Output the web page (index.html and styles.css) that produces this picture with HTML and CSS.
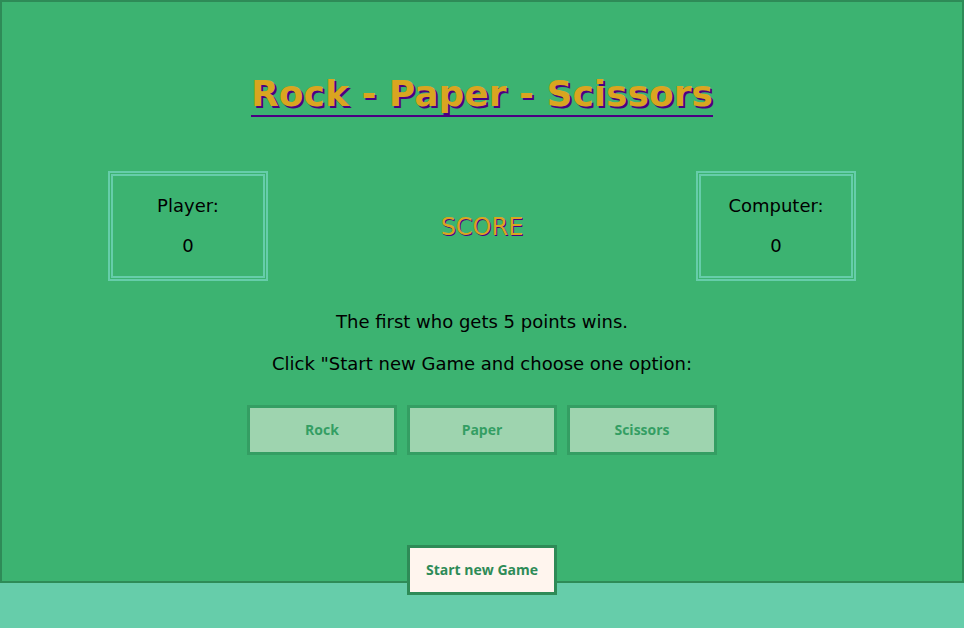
FILE: index.html
```html
<!DOCTYPE html>
<html lang="en">
<head>
<meta charset="utf-8">
<title>Rock - Paper - Scissors</title>
<link rel="stylesheet" href="styles.css">
</head>
<body>
<div class="game">
  <h1 class="title">Rock - Paper - Scissors</h1>
  <div class="scoreboard">
    <div class="score-box">
      <p class="score-line">Player:</p>
      <p class="score-line">0</p>
    </div>
    <div class="score-label">SCORE</div>
    <div class="score-box">
      <p class="score-line">Computer:</p>
      <p class="score-line">0</p>
    </div>
  </div>
  <p class="info info-first">The first who gets 5 points wins.</p>
  <p class="info info-second">Click "Start new Game and choose one option:</p>
  <div class="options">
    <button class="btn btn-option" disabled>Rock</button>
    <button class="btn btn-option" disabled>Paper</button>
    <button class="btn btn-option" disabled>Scissors</button>
  </div>
  <div class="start-row">
    <button class="btn btn-start">Start new Game</button>
  </div>
</div>
</body>
</html>
```
FILE: styles.css
```css
html, body {
  margin: 0;
  padding: 0;
}
body {
  background: #66cdaa;
  font-family: "DejaVu Sans", sans-serif;
  font-size: 18px;
  color: #000;
  min-height: 628px;
}
.game {
  box-sizing: border-box;
  width: 964px;
  height: 583px;
  background: #3cb371;
  border: 2px solid #2e8b57;
  text-align: center;
  padding-top: 71px;
}
.title {
  display: inline-block;
  margin: 0;
  font-size: 36px;
  font-weight: bold;
  line-height: 42px;
  color: #daa520;
  text-shadow: 2px 2px 0 #4b0082;
  border-bottom: 2px solid #4b0082;
}
.scoreboard {
  margin: 54px auto 0;
  width: 748px;
  display: grid;
  grid-template-columns: 160px 1fr 160px;
  align-items: center;
}
.score-box {
  box-sizing: border-box;
  height: 110px;
  border: 5px double #66cdaa;
  padding-top: 19px;
  display: flex;
  flex-direction: column;
  gap: 19px;
}
.score-line {
  margin: 0;
  line-height: 21px;
}
.score-label {
  font-size: 24px;
  color: #daa520;
  text-shadow: 1px 1px 0 #4b0082;
  line-height: 28px;
  padding-top: 2px;
}
.info {
  margin: 0;
  line-height: 21px;
}
.info-first {
  margin-top: 30px;
}
.info-second {
  margin-top: 21px;
}
.options {
  margin-top: 31px;
  display: flex;
  justify-content: center;
  gap: 10px;
}
.btn {
  box-sizing: border-box;
  width: 150px;
  height: 50px;
  background: #fff5ee;
  border: 3px solid #2e8b57;
  color: #2e8b57;
  font-family: "Open Sans", sans-serif;
  font-weight: bold;
  font-size: 14px;
  padding: 0 0 2px;
  cursor: pointer;
}
.btn-option:disabled {
  opacity: 0.5;
  cursor: default;
}
.start-row {
  margin-top: 90px;
  display: flex;
  justify-content: center;
}
```
